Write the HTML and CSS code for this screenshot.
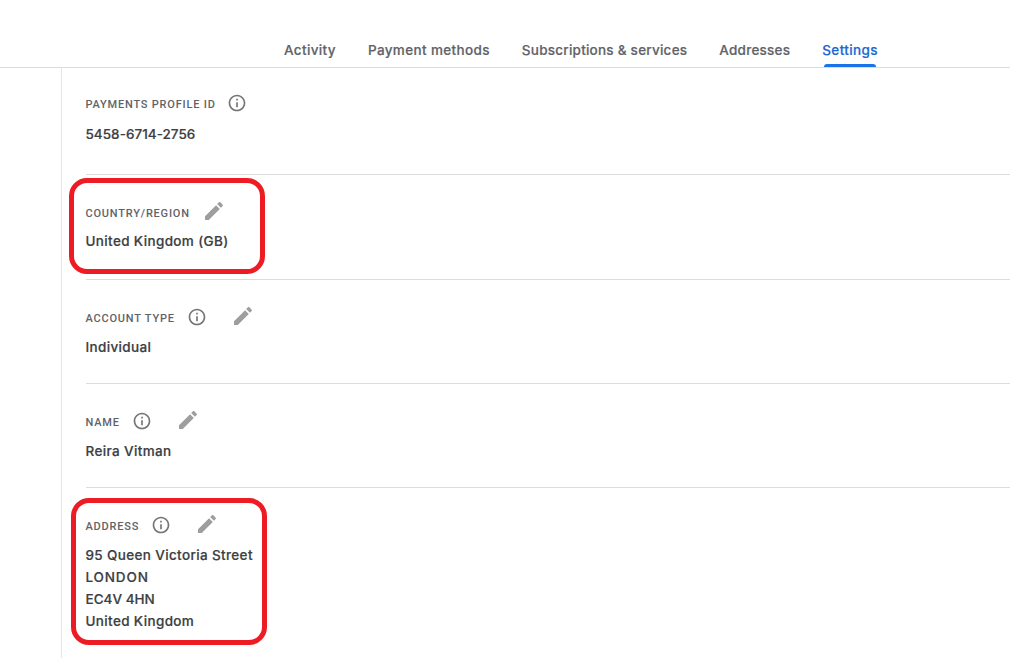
FILE: index.html
```html
<!DOCTYPE html>
<html lang="en">
<head>
  <meta charset="UTF-8" />
  <meta name="viewport" content="width=device-width, initial-scale=1.0"/>
  <title>Settings</title>
  <link rel="stylesheet" href="styles.css">
</head>
<body>

  <svg class="sprite" width="0" height="0">
    <symbol id="info" viewBox="0 0 24 24">
      <path d="M11 7h2v2h-2zm0 4h2v6h-2zm1-9C6.48 2 2 6.48 2 12s4.48 10 10 10 10-4.48 10-10S17.52 2 12 2zm0 18c-4.41 0-8-3.59-8-8s3.59-8 8-8 8 3.59 8 8-3.59 8-8 8z"/>
    </symbol>
    <symbol id="edit" viewBox="0 0 24 24">
      <path d="M3 17.25V21h3.75L17.81 9.94l-3.75-3.75L3 17.25zM20.71 7.04c.39-.39.39-1.02 0-1.41l-2.34-2.34c-.39-.39-1.02-.39-1.41 0l-1.83 1.83 3.75 3.75 1.83-1.83z"/>
    </symbol>
  </svg>

  <nav class="tabs">
    <a class="tab">Activity</a>
    <a class="tab">Payment methods</a>
    <a class="tab tight">Subscriptions &amp; services</a>
    <a class="tab tight">Addresses</a>
    <a class="tab active">Settings</a>
  </nav>

  <main class="panel">
    <section class="row profile">
      <div class="head">
        <span class="label">PAYMENTS PROFILE ID</span>
        <svg class="info"><use href="#info"/></svg>
      </div>
      <div class="value digits">5458-6714-2756</div>
    </section>

    <section class="row country">
      <div class="head">
        <span class="label">COUNTRY/REGION</span>
        <svg class="edit"><use href="#edit"/></svg>
      </div>
      <div class="value">United Kingdom (GB)</div>
      <div class="mark"></div>
    </section>

    <section class="row account">
      <div class="head">
        <span class="label">ACCOUNT TYPE</span>
        <svg class="info"><use href="#info"/></svg>
        <svg class="edit"><use href="#edit"/></svg>
      </div>
      <div class="value">Individual</div>
    </section>

    <section class="row name">
      <div class="head">
        <span class="label">NAME</span>
        <svg class="info"><use href="#info"/></svg>
        <svg class="edit"><use href="#edit"/></svg>
      </div>
      <div class="value">Reira Vitman</div>
    </section>

    <section class="row address">
      <div class="head">
        <span class="label">ADDRESS</span>
        <svg class="info"><use href="#info"/></svg>
        <svg class="edit"><use href="#edit"/></svg>
      </div>
      <div class="value">95 Queen Victoria Street</div>
      <div class="value city">LONDON</div>
      <div class="value digits">EC4V 4HN</div>
      <div class="value">United Kingdom</div>
      <div class="mark"></div>
    </section>
  </main>

</body>
</html>
```
FILE: styles.css
```css
* {
  box-sizing: border-box;
}

body {
  margin: 0;
  height: 658px;
  overflow: hidden;
  background: #fff;
  display: flex;
  flex-direction: column;
  font-family: Inter, sans-serif;
  font-size: 13.5px;
  font-weight: 500;
  letter-spacing: 0.36px;
  color: #3c4043;
  -webkit-text-stroke: 0.2px;
}

.sprite {
  position: absolute;
}

.tabs {
  flex: none;
  height: 68px;
  padding: 34px 0 0 284px;
  border-bottom: 1px solid #dadce0;
  display: flex;
  gap: 32px;
  color: #5f6368;
}

.tab {
  position: relative;
  line-height: 33px;
  white-space: nowrap;
}

.tab.tight {
  letter-spacing: 0.24px;
}

.tab.active {
  color: #1967d2;
}

.tab.active::after {
  content: "";
  position: absolute;
  left: 2px;
  right: 2px;
  bottom: 0;
  height: 3px;
  background: #1a73e8;
  border-radius: 3px 3px 0 0;
}

.panel {
  flex: 1;
  margin-left: 61px;
  padding-left: 24px;
  border-left: 1px solid #e4e6e8;
}

.row {
  position: relative;
  height: 104px;
  padding-top: 25px;
  border-bottom: 1px solid #dadce0;
}

.head {
  height: 24px;
  margin-bottom: 7px;
  display: flex;
  align-items: center;
}

.label {
  font-family: Roboto, sans-serif;
  font-size: 11px;
  font-weight: 500;
  letter-spacing: 0.8px;
  line-height: 16px;
  padding-top: 3px;
  margin-left: -0.5px;
  color: #5f6368;
  -webkit-text-stroke: 0;
}

.info {
  width: 20px;
  height: 20px;
  margin-left: 11.5px;
  fill: #757575;
}

.edit {
  width: 24px;
  height: 24px;
  margin: -2px 0 0 24px;
  fill: #9e9e9e;
}

.value {
  margin-left: -0.5px;
  line-height: 22px;
}

.digits {
  letter-spacing: 0.02px;
}

.city {
  letter-spacing: 0.85px;
}

.profile {
  height: 107px;
  padding-top: 23px;
}

.profile .head {
  margin-bottom: 8px;
}

.country {
  height: 105px;
}

.country .head {
  margin-bottom: 6px;
}

.country .edit {
  margin-left: 12.5px;
}

.account .info,
.name .info {
  margin-left: 12.5px;
}

.name .edit {
  margin-left: 23.5px;
}

.address {
  height: 170px;
  border-bottom: none;
}

/* red highlight around a row */
.mark {
  position: absolute;
  left: -17px;
  top: 3px;
  width: 196px;
  height: 96px;
  border: 5px solid #ed1c24;
  border-radius: 18px;
}

.address .mark {
  left: -15px;
  top: 10px;
  height: 147px;
}
```
